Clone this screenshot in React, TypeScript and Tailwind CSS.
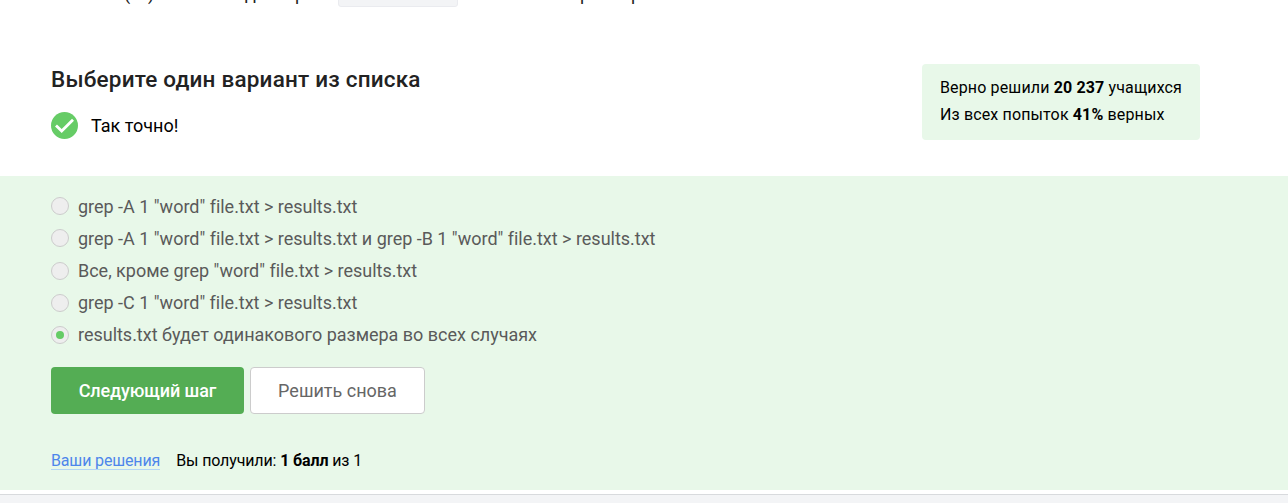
import React from "react";

const options = [
  { text: 'grep -A 1 "word" file.txt > results.txt', checked: false },
  { text: 'grep -A 1 "word" file.txt > results.txt и grep -B 1 "word" file.txt > results.txt', checked: false },
  { text: 'Все, кроме grep "word" file.txt > results.txt', checked: false },
  { text: 'grep -C 1 "word" file.txt > results.txt', checked: false },
  { text: "results.txt будет одинакового размера во всех случаях", checked: true },
];

/* Bottom edge of the preceding paragraph, scrolled out of view. */
function ScrolledLine() {
  return (
    <div className="flex h-[7px] items-end overflow-hidden text-[18px] leading-[21px] text-[#222]">
      <span className="mb-[3px] ml-[124px] w-[24px]">(</span>
      <span className="mb-[3px] w-[97px]">)</span>
      <span className="mb-[3px] w-[50px]">д</span>
      <span className="mb-[3px] w-[43px]">р</span>
      <span className="h-[24px] w-[120px] rounded-[3px] border border-[#eaebef] bg-[#f3f4f6]" />
      <span className="mb-[3px] ml-[122px] w-[51px]">р</span>
      <span className="mb-[3px]">р</span>
    </div>
  );
}

function Radio({ checked }: { checked: boolean }) {
  return (
    <span className="flex size-[18px] shrink-0 items-center justify-center rounded-full border border-[#ccc] bg-[#eee]">
      {checked && <span className="size-2 rounded-full bg-[#66cc66]" />}
    </span>
  );
}

export default function App() {
  return (
    <div className="h-[503px] overflow-hidden bg-white font-['Roboto',sans-serif] text-black">
      <ScrolledLine />
      <header className="flex h-[169px] items-start justify-between pt-[57px] pr-[88px] pl-[51px]">
        <div>
          <h2 className="text-[22.5px] leading-[30px] font-medium tracking-[0.2px] text-[#222]">Выберите один вариант из списка</h2>
          <div className="mt-[18px] flex items-center gap-[13px]">
            <svg width="27" height="27" viewBox="0 0 27 27" fill="none">
              <circle cx="13.5" cy="13.5" r="13.5" fill="#66cc66" />
              <path d="M5 13.5 L10.7 19.1 L22 7.8" stroke="white" strokeWidth="2.8" />
            </svg>
            <span className="text-[18px] leading-[27px]">Так точно!</span>
          </div>
        </div>
        <aside className="h-[76px] w-[278px] rounded-[4px] bg-[#e8f8e9] pt-[10px] pl-[18px] text-[16px] leading-[27px] tracking-[0.14px] whitespace-nowrap">
          <p>Верно решили <b>20 237</b> учащихся</p>
          <p>Из всех попыток <b>41%</b> верных</p>
        </aside>
      </header>
      <main className="h-[314px] bg-[#e8f8e9] pt-[14px] pl-[51px]">
        <ul>
          {options.map((option, index) => (
            <li key={option.text} className="flex h-8 items-center gap-[9px] text-[18px] tracking-[-0.015px] whitespace-nowrap text-[#5a5a5a]">
              <span className={index > 1 ? "pt-[2px]" : ""}>
                <Radio checked={option.checked} />
              </span>
              <span>{option.text}</span>
            </li>
          ))}
        </ul>
        <div className="mt-[17px] flex gap-[6px]">
          <button className="h-[47px] w-[193px] rounded-[4px] bg-[#54ad54] text-[18px] font-medium tracking-[-0.1px] text-white">Следующий шаг</button>
          <button className="h-[47px] w-[175px] rounded-[4px] border border-[#ccc] bg-white text-[18px] text-[#666]">Решить снова</button>
        </div>
        <div className="mt-[38px] flex gap-4 text-[16px] leading-[18px]">
          <a className="h-[18px] border-b border-[#b3d6f5] tracking-[-0.15px] text-[#4d86eb]">Ваши решения</a>
          <span className="tracking-[-0.13px]">Вы получили: <b>1 балл</b> из 1</span>
        </div>
      </main>
      <footer className="mt-1 h-[9px] border-t border-[#d8dadd] bg-[#f3f4f6]" />
    </div>
  );
}
